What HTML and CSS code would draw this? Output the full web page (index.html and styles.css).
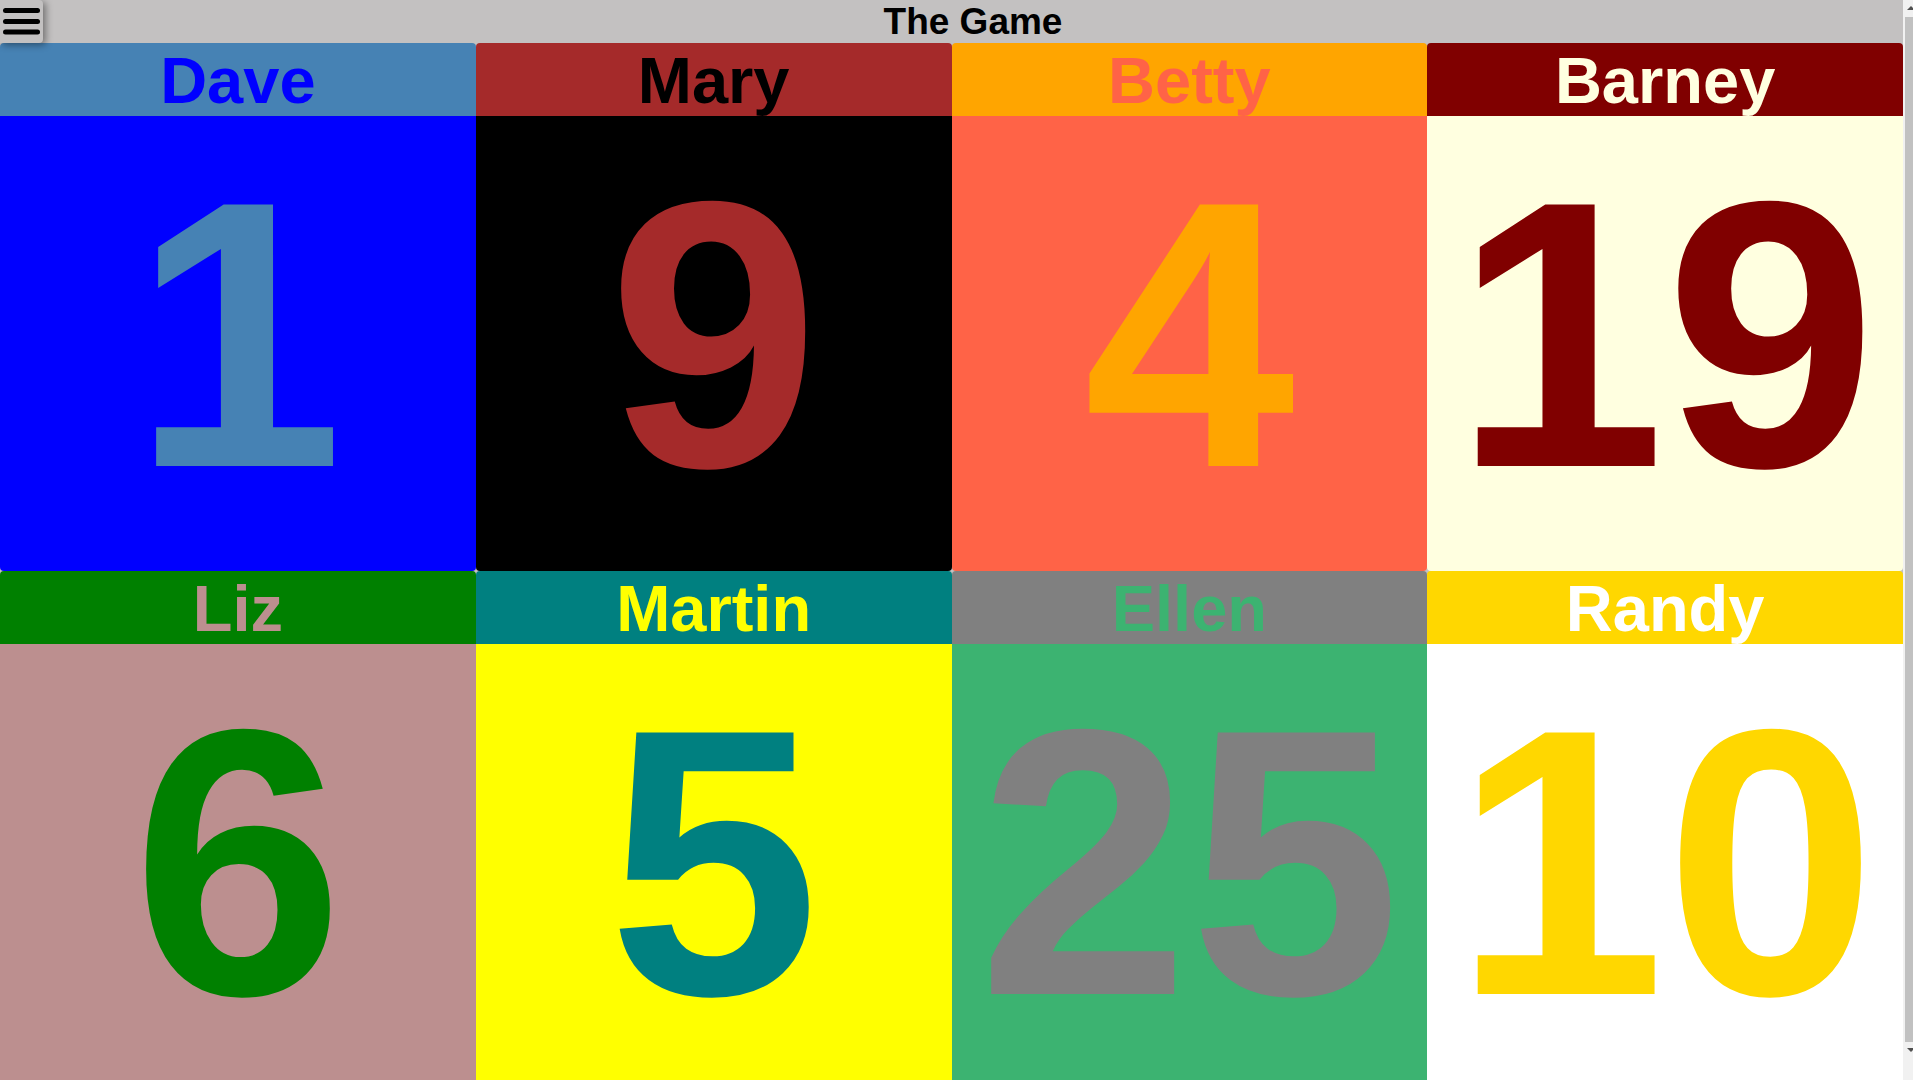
FILE: index.html
```html
<!DOCTYPE html>
<html lang="en">
<head>
<meta charset="utf-8">
<title>The Game</title>
<link rel="stylesheet" href="styles.css">
</head>
<body>
<div class="page">
  <header class="topbar">
    <button class="menu-btn" aria-label="Menu">
      <svg width="43" height="43" viewBox="0 0 43 43">
        <line x1="5.5" y1="10.5" x2="37.5" y2="10.5" stroke="#000" stroke-width="5" stroke-linecap="round"/>
        <line x1="5.5" y1="21.5" x2="37.5" y2="21.5" stroke="#000" stroke-width="5" stroke-linecap="round"/>
        <line x1="5.5" y1="32" x2="37.5" y2="32" stroke="#000" stroke-width="5" stroke-linecap="round"/>
      </svg>
    </button>
    <h1 class="title">The Game</h1>
  </header>
  <main class="grid">
    <section class="card dave">
      <div class="card-name">Dave</div>
      <div class="card-num">1</div>
    </section>
    <section class="card mary">
      <div class="card-name">Mary</div>
      <div class="card-num">9</div>
    </section>
    <section class="card betty">
      <div class="card-name">Betty</div>
      <div class="card-num">4</div>
    </section>
    <section class="card barney">
      <div class="card-name">Barney</div>
      <div class="card-num">19</div>
    </section>
    <section class="card liz">
      <div class="card-name">Liz</div>
      <div class="card-num">6</div>
    </section>
    <section class="card martin">
      <div class="card-name">Martin</div>
      <div class="card-num">5</div>
    </section>
    <section class="card ellen">
      <div class="card-name">Ellen</div>
      <div class="card-num">25</div>
    </section>
    <section class="card randy">
      <div class="card-name">Randy</div>
      <div class="card-num">10</div>
    </section>
  </main>
</div>
<div class="scrollbar" aria-hidden="true">
  <span class="sb-arrow sb-up"></span>
  <span class="sb-thumb"></span>
  <span class="sb-arrow sb-down"></span>
</div>
</body>
</html>
```

FILE: styles.css
```css
html {
  background: #c3c1c1;
}
body {
  margin: 0;
  overflow: hidden;
  background: #c3c1c1;
  font-family: "Liberation Sans", Arial, sans-serif;
}
.page {
  margin-right: 10px;
}
.topbar {
  display: flex;
  align-items: center;
  height: 43px;
}
.menu-btn {
  width: 43px;
  height: 43px;
  padding: 0;
  border: 0;
  border-radius: 0 4px 4px 0;
  background: #c3c1c1;
  box-shadow: 3px 2px 7px rgba(0, 0, 0, 0.4);
  display: flex;
  align-items: center;
  justify-content: center;
  position: relative;
  z-index: 1;
}
.title {
  flex: 1;
  margin: 0;
  text-align: center;
  font-size: 37px;
  font-weight: bold;
  line-height: 43px;
  color: #000;
}
.grid {
  display: grid;
  grid-template-columns: repeat(4, 1fr);
}
.card {
  border-radius: 4px;
  overflow: hidden;
  display: flex;
  flex-direction: column;
}
.card-name {
  height: 73px;
  box-sizing: border-box;
  padding-top: 3px;
  font-size: 65px;
  line-height: 70px;
  font-weight: bold;
  text-align: center;
}
.card-num {
  height: 455px;
  font-size: 380px;
  line-height: normal;
  font-weight: bold;
  text-align: center;
  overflow: hidden;
}
.dave .card-name { background: #4682b4; color: #0000ff; }
.dave .card-num { background: #0000ff; color: #4682b4; }
.mary .card-name { background: #a52a2a; color: #000000; }
.mary .card-num { background: #000000; color: #a52a2a; }
.betty .card-name { background: #ffa500; color: #ff6347; }
.betty .card-num { background: #ff6347; color: #ffa500; }
.barney .card-name { background: #800000; color: #ffffe0; }
.barney .card-num { background: #ffffe0; color: #800000; }
.liz .card-name { background: #008000; color: #bc8f8f; }
.liz .card-num { background: #bc8f8f; color: #008000; }
.martin .card-name { background: #008080; color: #ffff00; }
.martin .card-num { background: #ffff00; color: #008080; }
.ellen .card-name { background: #808080; color: #3cb371; }
.ellen .card-num { background: #3cb371; color: #808080; }
.randy .card-name { background: #ffd700; color: #ffffff; }
.randy .card-num { background: #ffffff; color: #ffd700; }

/* imitation of the window's vertical scrollbar, drawn over the right edge */
.scrollbar {
  position: fixed;
  top: 0;
  right: 0;
  width: 10px;
  height: 100vh;
  background: #f1f1f1;
  display: flex;
  flex-direction: column;
  align-items: flex-end;
}
.sb-arrow {
  height: 17px;
  width: 10px;
  position: relative;
}
.sb-arrow::after {
  content: "";
  position: absolute;
  left: 4px;
  width: 0;
  height: 0;
  border-left: 4px solid transparent;
  border-right: 4px solid transparent;
}
.sb-up::after {
  top: 6px;
  border-bottom: 4px solid #505050;
}
.sb-down::after {
  bottom: 7px;
  border-top: 4px solid #505050;
}
.sb-thumb {
  width: 8px;
  height: 1025px;
  background: #c1c1c1;
}
```
